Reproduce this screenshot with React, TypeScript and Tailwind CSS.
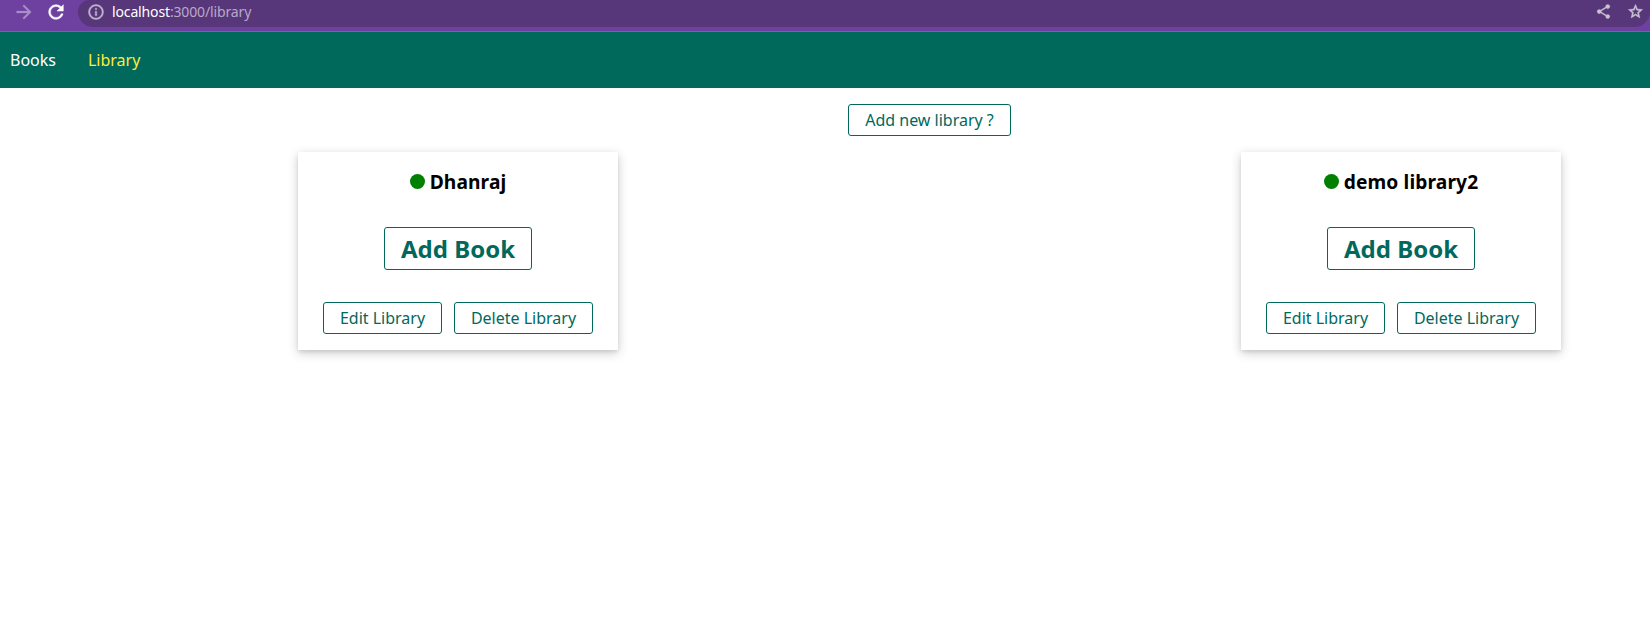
import React from "react";

const outline =
  "flex items-center justify-center rounded-[3px] border border-[#00695c] bg-white text-[#00695c] whitespace-nowrap";

function BrowserBar() {
  return (
    <div className="flex h-8 border-b border-[#8459b0] bg-[#6e41a0]">
      <div className="flex w-[78px] shrink-0 pt-px">
        <svg className="ml-[13px] h-[22px] w-[22px] text-[#ab8fc9]" viewBox="0 0 24 24" fill="currentColor">
          <path d="m12 4-1.41 1.41L16.17 11H4v2h12.17l-5.58 5.59L12 20l8-8z" stroke="currentColor" strokeWidth=".3" />
        </svg>
        <svg className="ml-[10px] h-[22px] w-[22px] text-white" viewBox="0 0 24 24" fill="currentColor">
          <path d="M17.65 6.35C16.2 4.9 14.21 4 12 4c-4.42 0-7.99 3.58-7.99 8s3.57 8 7.99 8c3.73 0 6.84-2.55 7.73-6h-2.08c-.82 2.33-3.04 4-5.65 4-3.31 0-6-2.69-6-6s2.69-6 6-6c1.66 0 3.14.69 4.22 1.78L13 11h7V4z" stroke="currentColor" strokeWidth=".5" />
        </svg>
      </div>
      <div className="flex h-[27px] flex-1 rounded-bl-[16px] rounded-br-[16px] rounded-tl-[12px] bg-[#57367a] pr-[6px]">
        <svg className="ml-[9px] mt-[3px] h-[18px] w-[18px] text-[#c0b4cc]" viewBox="0 0 24 24" fill="currentColor">
          <path d="M11 7h2v2h-2zm0 4h2v6h-2zm1-9C6.48 2 2 6.48 2 12s4.48 10 10 10 10-4.48 10-10S17.52 2 12 2zm0 18c-4.41 0-8-3.59-8-8s3.59-8 8-8 8 3.59 8 8-3.59 8-8 8z" stroke="currentColor" strokeWidth=".5" />
        </svg>
        <div className="ml-[7px] h-6 font-['Noto_Sans',sans-serif] text-[14px] leading-[24px] tracking-[-0.14px] text-[#b9a9c9]">
          <span className="text-white">localhost</span>:3000/library
        </div>
        <svg className="ml-auto mt-[3px] h-[17px] w-[17px] text-[#c9c2cf]" viewBox="0 0 24 24" fill="currentColor">
          <path d="M18 16.08c-.76 0-1.44.3-1.96.77L8.91 12.7c.05-.23.09-.46.09-.7s-.04-.47-.09-.7l7.05-4.11c.54.5 1.25.81 2.04.81 1.66 0 3-1.34 3-3s-1.34-3-3-3-3 1.34-3 3c0 .24.04.47.09.7L8.04 9.81C7.5 9.31 6.79 9 6 9c-1.66 0-3 1.34-3 3s1.34 3 3 3c.79 0 1.5-.31 2.04-.81l7.12 4.16c-.05.21-.08.43-.08.65 0 1.61 1.31 2.92 2.92 2.92s2.92-1.31 2.92-2.92-1.31-2.92-2.92-2.92z" stroke="currentColor" strokeWidth=".4" />
        </svg>
        <svg className="ml-[15px] mt-[3px] h-[17px] w-[17px] text-[#c9c2cf]" viewBox="0 0 24 24" fill="currentColor">
          <path d="m22 9.24-7.19-.62L12 2 9.19 8.63 2 9.24l5.46 4.73L5.82 21 12 17.27 18.18 21l-1.63-7.03zM12 15.4l-3.76 2.27 1-4.28-3.32-2.88 4.38-.38L12 6.1l1.71 4.04 4.38.38-3.32 2.88 1 4.28z" stroke="currentColor" strokeWidth=".7" />
        </svg>
      </div>
    </div>
  );
}

function LibraryCard({ name }: { name: string }) {
  return (
    <section className="flex h-[198px] w-80 flex-col items-center bg-white pt-4 shadow-[0_3px_10px_rgba(0,0,0,0.2),0_2px_3px_rgba(0,0,0,0.08)]">
      <h3 className="flex h-7 items-center gap-[5px] text-[19.2px] font-bold tracking-[0.12px] text-black">
        <span className="mb-[2px] h-[15px] w-[15px] rounded-full bg-[#008000]" />
        {name}
      </h3>
      <button className={`${outline} mt-[31px] h-[43px] w-[148px] text-2xl font-bold`}>Add Book</button>
      <div className="mt-8 flex gap-3">
        <button className={`${outline} h-8 w-[119px]`}>Edit Library</button>
        <button className={`${outline} h-8 w-[139px]`}>Delete Library</button>
      </div>
    </section>
  );
}

export default function App() {
  return (
    <div className="h-[617px] overflow-hidden bg-white font-['Noto_Sans',sans-serif] text-base">
      <BrowserBar />
      <nav className="flex h-14 items-center gap-8 bg-[#00695c] pl-[10px]">
        <a className="text-white">Books</a>
        <a className="text-[#ffeb3b]">Library</a>
      </nav>
      <main>
        <div className="flex pl-[848px] pt-4">
          <button className={`${outline} h-8 w-[163px]`}>Add new library ?</button>
        </div>
        <div className="flex justify-between pl-[298px] pr-[89px] pt-4">
          <LibraryCard name="Dhanraj" />
          <LibraryCard name="demo library2" />
        </div>
      </main>
    </div>
  );
}
